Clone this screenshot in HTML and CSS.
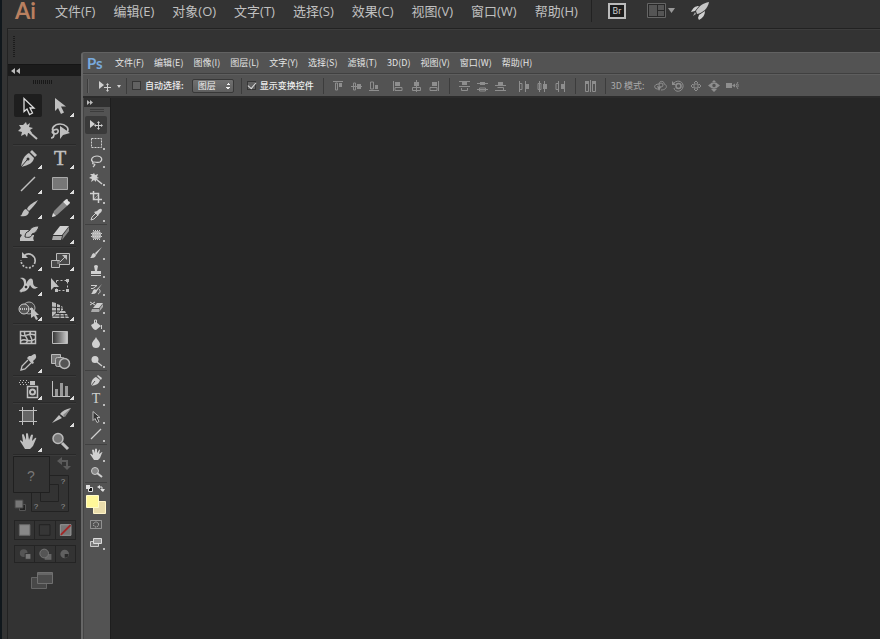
FILE: index.html
```html
<!DOCTYPE html>
<html lang="zh-CN">
<head>
    <meta charset="UTF-8">
    <meta name="viewport" content="width=device-width, initial-scale=1.0">
    <title>Ai / Ps</title>
    <link rel="stylesheet" href="styles.css">
</head>
<body>

    <!-- Illustrator window -->
    <div class="ai">
        <div class="ai-menubar">
            <div class="ai-logo">Ai</div>
            <nav class="ai-menu">
                <a href="#">文件(F)</a>
                <a href="#">编辑(E)</a>
                <a href="#">对象(O)</a>
                <a href="#">文字(T)</a>
                <a href="#">选择(S)</a>
                <a href="#">效果(C)</a>
                <a href="#">视图(V)</a>
                <a href="#">窗口(W)</a>
                <a href="#">帮助(H)</a>
            </nav>
            <div class="ai-apps">
                <button class="bridge">Br</button>
                <button class="app-btn" aria-label="排列文档">
                    <svg width="30" height="18" viewBox="0 0 30 18"><path d="M1.500 1.500h18v14h-18z" fill="#282828" stroke="#666"/><path d="M3 3h8v11H3zM12 3h6v5h-6zM12 9h6v5h-6z" fill="#555"/><path d="M22 6h7l-3.500 5z" fill="#999"/></svg>
                </button>
                <button class="app-btn" aria-label="GPU">
                    <svg width="20" height="20" viewBox="0 0 20 20"><path d="M19 1c-6 1-10 4-13 9l1 3c6-1 11-6 12-12z" fill="#c4c4c4"/><path d="M9 5C5 5 3 7 1 11l4-1zM15 10c0 4-2 7-6 9l-1-2 1-3z" fill="#d0d0d0"/><path d="M5 11l-2 4 3-2z" fill="#aaa"/></svg>
                </button>
            </div>
        </div>
        <div class="ai-control"><span class="grip-v"></span></div>

        <div class="ai-panel">
            <div class="ai-panel-head">
                <svg width="9" height="6" viewBox="0 0 9 6"><path d="M4 0v6L0 3zM9 0v6L5 3z"/></svg>
            </div>
            <div class="ai-panel-grip"></div>

            <div class="ai-tools">
                <button class="active" aria-label="选择工具"><svg viewBox="0 0 28 25"><path d="M10 4.500v13l3-2.500 2.500 5.500 3-1.500-2.500-5h4z" fill="#1c1c1c" stroke="#ddd" stroke-width="1.300"/></svg></button>
                <button class="more" aria-label="直接选择工具"><svg viewBox="0 0 28 25"><path d="M9 4v13l3-3 3 6 3-1.500-3-6h5z"/></svg></button>
                <button aria-label="魔棒工具"><svg viewBox="0 0 28 25"><path d="M12 3l1 3 3-2-1 4 4 1-3 2 2 3-4 0-1 4-2-3-4 2 1-4-4-1 3-3-2-3 4 0z"/><path class="line" d="M15 13l8 7" stroke-width="2"/></svg></button>
                <button aria-label="套索工具"><svg viewBox="0 0 28 25"><path class="line" d="M8 14c-4-5 1-9 6-9s10 4 7 8M6 13c3-4 7-3 6 0s-5 2-6 0M8 15c0 2-1 4-3 4" stroke-width="1.700"/><path d="M14 7v13l3-4 7-2z"/></svg></button>
            </div>
            <div class="ai-tools">
                <button class="more" aria-label="钢笔工具"><svg viewBox="0 0 28 25"><path d="M18 4l5 5-2 2-5-5z"/><path d="M15 7l5 5c-1 5-5 7-13 9 1-8 4-12 8-14z"/><path d="M7 21l6-7" stroke="#333"/><circle cx="14" cy="13" r="1.500" fill="#333"/></svg></button>
                <button class="more" aria-label="文字工具"><svg viewBox="0 0 28 25"><text class="glyph" x="14" y="19">T</text></svg></button>
                <button class="more" aria-label="直线段工具"><svg viewBox="0 0 28 25"><path class="line" d="M7 20L21 6" stroke-width="1.500"/></svg></button>
                <button class="more" aria-label="矩形工具"><svg viewBox="0 0 28 25"><path d="M6.500 6.500h15v12h-15z" fill="#777" stroke="#aaa"/></svg></button>
                <button class="more" aria-label="画笔工具"><svg viewBox="0 0 28 25"><path d="M24 4c-6 3-10 6-11 9l2 2c3-3 6-6 9-11zM12 13l3 3c-1 4-4 5-9 4 3-1 2-6 6-7z"/></svg></button>
                <button class="more" aria-label="铅笔工具"><svg viewBox="0 0 28 25"><path d="M17 6l4 4-10 9-5 2 2-6z" fill="#888"/><path d="M18 5q4-4 4 0 4 1 0 4l-1 1-4-4z" fill="#e0e0e0"/><path d="M6 21l1-4 3 3z" fill="#ddd"/></svg></button>
                <button aria-label="斑点画笔工具"><svg viewBox="0 0 28 25"><path d="M6 9h9l-2 5h7v1c-1 1-1 3 0 5H6v-3l2-3-2-1z"/><path d="M25 5c-6 0-8 2-10 5-3 1-4 3-4 6 4 1 7 0 7-3 4-1 6-4 7-8z" stroke="#333"/></svg></button>
                <button class="more" aria-label="橡皮擦工具"><svg viewBox="0 0 28 25"><path d="M14 5h9l-7 9H7z" fill="#d0d0d0"/><path d="M7 15h9l-1 4H6z" fill="#aaa"/><path d="M17 14l6-8v4l-7 9z" fill="#888"/></svg></button>
            </div>
            <div class="ai-tools">
                <button class="more" aria-label="旋转工具"><svg viewBox="0 0 28 25"><path class="line" d="M10 8c5-5 12 0 11 6" stroke-width="1.700"/><path class="line" d="M21 14c-2 9-14 7-14-2" stroke-width="1.700" stroke-dasharray="2 1.500"/><path d="M8 4v6h6z"/></svg></button>
                <button class="more" aria-label="比例缩放工具"><svg viewBox="0 0 28 25"><path d="M10.500 5.500h13v11h-13z" fill="#484848" stroke="#bbb"/><path d="M5.500 12.500h8v7h-8z" fill="#484848" stroke="#bbb"/><path d="M11 13h3v3h-3z" fill="#777"/><path class="line" d="M14 14l6-6"/><path d="M16 7h5v5z"/></svg></button>
                <button class="more" aria-label="宽度工具"><svg viewBox="0 0 28 25"><path d="M6 5c4-1 7 1 6 6 3-6 6-7 7-3 0 4 1 6 5 6-3 3-6 2-8-2-2 6-6 8-10 6 0-2 4-3 4-7 0-3-1-5-4-6z"/><path class="line" d="M7 19L19 8" stroke="#333"/><circle cx="12" cy="14" r="2" fill="#333" stroke="#ddd"/><circle class="line" cx="7" cy="18" r="1"/></svg></button>
                <button aria-label="自由变换工具"><svg viewBox="0 0 28 25"><path class="line" d="M10.500 7.500h11v10h-11z" stroke-dasharray="2 2"/><path d="M5 5v12l3-3h5zM20 6h3v3h-3zM20 16h3v3h-3zM9 16h3v3H9z"/></svg></button>
                <button class="more" aria-label="形状生成器工具"><svg viewBox="0 0 28 25"><circle cx="15" cy="10" r="6" fill="#444" stroke="#aaa"/><circle cx="10" cy="11" r="5" fill="#555" stroke="#ccc"/><path class="line" d="M6 11h13" stroke-dasharray="1 1" stroke-width="2"/><path d="M17 9v11l3-2 2 4 2-1-2-4h3z"/></svg></button>
                <button class="more" aria-label="透视网格工具"><svg viewBox="0 0 28 25"><path d="M6 4l4 1v10l-4 4zM11 6l3 1v6l-3 2zM15 8l2 1v3l-2 1z" fill="#bbb"/><path d="M6 20l4-4h11l2 4zM12 15l2-2h5l1 2z" fill="#bbb"/><path d="M5 9l12 1M5 13h9M14 16v4M18 16l1 4M8 18h15" fill="none" stroke="#333"/></svg></button>
            </div>
            <div class="ai-tools">
                <button aria-label="网格工具"><svg viewBox="0 0 28 25"><path class="line" d="M6.500 6.500h15v12h-15zM7 10c4 3 7-3 14 0M7 16c4-4 8 3 14-2M11 6c-3 5 6 8 1 12M17 6c-4 5 4 8 0 12" stroke-width="1.500"/></svg></button>
                <button aria-label="渐变工具"><svg viewBox="0 0 28 25"><defs><linearGradient id="fade"><stop stop-color="#333"/><stop offset="1" stop-color="#ccc"/></linearGradient></defs><path d="M6.500 6.500h15v12h-15z" fill="url(#fade)" stroke="#bbb"/></svg></button>
                <button class="more" aria-label="吸管工具"><svg viewBox="0 0 28 25"><path d="M17 6q5-4 5 0 1 2-3 5l1 2-2 1-5-6 2-2z"/><path class="line" d="M14 10l-6 6-1 4 4-1 6-6" stroke-width="1.300"/></svg></button>
                <button aria-label="混合工具"><svg viewBox="0 0 28 25"><path d="M5.500 4.500h9v9h-9z" fill="#777" stroke="#bbb"/><rect x="9.500" y="7.500" width="9" height="9" rx="2" fill="#666" stroke="#bbb"/><circle cx="18.500" cy="13.500" r="5" fill="#555" stroke="#bbb" stroke-width="1.500"/></svg></button>
            </div>
            <div class="ai-tools">
                <button class="more" aria-label="符号喷枪工具"><svg viewBox="0 0 28 25"><path d="M16 4h5v4h-5z"/><path class="line" d="M13.500 9.500h10v11h-10z" stroke-width="1.500"/><circle class="line" cx="18.500" cy="15" r="2.500" stroke-width="2"/><path d="M6 3h1v1H6zM9 3h1v1H9zM12 3h1v1h-1zM5 5h1v1H5zM8 5h1v1H8zM11 5h1v1h-1zM14 5h1v1h-1zM6 7h1v1H6zM9 7h1v1H9zM12 7h1v1h-1z"/></svg></button>
                <button class="more" aria-label="柱形图工具"><svg viewBox="0 0 28 25"><path class="line" d="M6.500 4v15.500H24"/><path d="M9 12h3v7H9zM14 6h3v13h-3zM19 9h3v10h-3z" fill="#999"/></svg></button>
            </div>
            <div class="ai-tools">
                <button aria-label="画板工具"><svg viewBox="0 0 28 25"><path d="M9 7h10v10H9z" fill="#666"/><path class="line" d="M8.500 3v18M19.500 3v18M5 6.500h18M5 17.500h18"/></svg></button>
                <button class="more" aria-label="切片工具"><svg viewBox="0 0 28 25"><path d="M25 4c-5 1-9 3-11 6l4 3zM13 11l3 3-10 5z"/><path d="M17 11l8-7-6 9z" fill="#888"/></svg></button>
                <button class="more" aria-label="抓手工具"><svg viewBox="0 0 28 25"><path d="M11 20l-5-8q0-2 3 1L8 6q1-2 2 0l2 5V5q1-2 2 0l1 6 2-5q1-1 2 0l-1 6 3-3q2-1 1 1l-3 7-3 3z"/></svg></button>
                <button aria-label="缩放工具"><svg viewBox="0 0 28 25"><circle cx="12" cy="9.500" r="5" fill="#777" stroke="#bbb" stroke-width="1.500"/><path class="line" d="M16 14l6 6" stroke-width="3"/></svg></button>
            </div>

            <!-- Fill and stroke -->
            <svg class="fill-stroke" width="64" height="60" viewBox="0 0 64 60">
                <path d="M18.500 19.500h37v36h-37zM27.500 28.500h18v17h-18z" fill="#333" stroke="#222"/>
                <path d="M.5.5h36v36H.5z" fill="#333" stroke="#202020"/>
                <path d="M48 5h6v7" fill="none" stroke="#5b5b5b" stroke-width="2"/>
                <path d="M49 1v8l-5-4zM50 10h8l-4 4z" fill="#5b5b5b"/>
                <path d="M6.500 48.500h6v6h-6z" fill="#222" stroke="#555"/>
                <path d="M2 44h8v8H2z" fill="#777" stroke="#444"/>
                <text class="mark-lg" x="18" y="25">?</text>
                <text class="mark" x="50" y="28">?</text>
                <text class="mark" x="23" y="53">?</text>
                <text class="mark" x="50" y="53">?</text>
            </svg>

            <div class="ai-modes">
                <button aria-label="颜色"><svg viewBox="0 0 20 18"><path d="M4.500 3.500h11v11h-11z" fill="#888" stroke="#666"/></svg></button>
                <button aria-label="渐变"><svg viewBox="0 0 20 18"><path d="M4.500 3.500h11v11h-11z" fill="#363636" stroke="#222"/></svg></button>
                <button aria-label="无"><svg viewBox="0 0 20 18"><path d="M4.500 3.500h11v11h-11z" fill="#777" stroke="#999"/><path d="M5 14L15 4" stroke="#a22626" stroke-width="2"/></svg></button>
            </div>
            <div class="ai-modes draw">
                <button aria-label="正常绘图"><svg viewBox="0 0 20 16"><circle cx="9" cy="7" r="4" fill="#555"/><path d="M10.500 7.500h6v6h-6z" fill="#777" stroke="#333"/></svg></button>
                <button aria-label="背面绘图"><svg viewBox="0 0 20 16"><path d="M10 8h7v6h-7z" fill="#666"/><circle cx="9.500" cy="7.500" r="4.500" fill="#555" stroke="#777"/></svg></button>
                <button aria-label="内部绘图"><svg viewBox="0 0 20 16"><circle cx="9" cy="8" r="4.500" fill="#606060"/><path d="M9 8h4q0 4-4 4z" fill="#2a2a2a"/></svg></button>
            </div>
            <button class="screen-mode" aria-label="更改屏幕模式"><svg width="24" height="20" viewBox="0 0 24 20"><path d="M1.500 6.500h15v11h-15z" fill="#484848" stroke="#666"/><path d="M7.500 1.500h15v11h-15z" fill="#4c4c4c" stroke="#707070"/><path d="M8 2h14v2H8z" fill="#666"/></svg></button>
        </div>
    </div>

    <!-- Photoshop window -->
    <div class="ps">
        <div class="ps-menubar">
            <div class="ps-logo">Ps</div>
            <nav class="ps-menu">
                <a href="#">文件(F)</a>
                <a href="#">编辑(E)</a>
                <a href="#">图像(I)</a>
                <a href="#">图层(L)</a>
                <a href="#">文字(Y)</a>
                <a href="#">选择(S)</a>
                <a href="#">滤镜(T)</a>
                <a href="#">3D(D)</a>
                <a href="#">视图(V)</a>
                <a href="#">窗口(W)</a>
                <a href="#">帮助(H)</a>
            </nav>
        </div>

        <div class="ps-options">
            <span class="ps-grip"></span>
            <button class="preset" aria-label="移动工具"><svg width="26" height="14" viewBox="0 0 26 14"><path d="M2 2v8l5-4z"/><path class="line" d="M10.500 5v7M7 8.500h7"/><path d="M9 6h3l-1.500-2zM9 11h3l-1.500 2zM20 6h4l-2 3z"/></svg></button>
            <span class="divider"></span>
            <input type="checkbox" id="autoSelect">
            <label class="opt-label" for="autoSelect">自动选择:</label>
            <select class="layer-select" aria-label="自动选择"><option>图层</option></select>
            <span class="divider"></span>
            <input type="checkbox" id="showTransform" checked>
            <label class="opt-label" for="showTransform">显示变换控件</label>
            <span class="divider"></span>
            <div class="align">
                <button aria-label="顶对齐"><svg viewBox="0 0 18 14"><path class="line" d="M4 2.500h10M6.500 4v7h2V4z"/><path d="M10 4h3v4h-3z"/></svg></button>
                <button aria-label="垂直居中对齐"><svg viewBox="0 0 18 14"><path class="line" d="M4 7.500h11M6.500 4v7h2V4z"/><path d="M10 5h4v5h-4z"/></svg></button>
                <button aria-label="底对齐"><svg viewBox="0 0 18 14"><path class="line" d="M4 11.500h10M5.500 3v7h3V3z"/><path d="M10 6h3v4h-3z"/></svg></button>
            </div>
            <div class="align">
                <button aria-label="左对齐"><svg viewBox="0 0 18 14"><path class="line" d="M4.500 2v10M6 8.500h7v3H6z"/><path d="M6 3h5v4H6z"/></svg></button>
                <button aria-label="水平居中对齐"><svg viewBox="0 0 18 14"><path class="line" d="M9.500 1v12M5.500 8.500h8v3h-8z"/><path d="M7 3h5v4H7z"/></svg></button>
                <button aria-label="右对齐"><svg viewBox="0 0 18 14"><path class="line" d="M13.500 2v10M5 8.500h7v3H5z"/><path d="M7 3h5v4H7z"/></svg></button>
            </div>
            <span class="divider"></span>
            <div class="align">
                <button aria-label="按顶分布"><svg viewBox="0 0 18 14"><path class="line" d="M4 2.500h11M4 7.500h11M6.500 9v2.500h6V9"/><path d="M7 3h5v3H7z"/></svg></button>
                <button aria-label="按垂直居中分布"><svg viewBox="0 0 18 14"><path class="line" d="M4 4.500h11M4 10.500h11M6.500 9v3h6V9z"/><path d="M7 3h5v3H7z"/></svg></button>
                <button aria-label="按底分布"><svg viewBox="0 0 18 14"><path class="line" d="M4 6.500h11M4 11.500h11M6.500 8.500h6V11"/><path d="M7 3h5v3H7z"/></svg></button>
            </div>
            <div class="align">
                <button aria-label="按左分布"><svg viewBox="0 0 18 14"><path class="line" d="M4.500 2v11M10.500 2v11M5 4.500h2v6H5"/><path d="M11 5h3v5h-3z"/></svg></button>
                <button aria-label="按水平居中分布"><svg viewBox="0 0 18 14"><path class="line" d="M6.500 2v11M11.500 2v11M5 4.500h3v6H5z"/><path d="M10 5h4v5h-4z"/></svg></button>
                <button aria-label="按右分布"><svg viewBox="0 0 18 14"><path class="line" d="M7.500 2v11M13.500 2v11M7 4.500H5v6h2"/><path d="M10 5h3v5h-3z"/></svg></button>
            </div>
            <span class="divider"></span>
            <div class="align">
                <button aria-label="自动对齐图层"><svg viewBox="0 0 18 14"><path class="line" d="M4.500 2.500h3v10h-3zM11.500 2.500h3v10h-3zM9.500 1v12" /><path d="M4 2h4v3H4zM11 2h4v3h-4z"/></svg></button>
            </div>
            <span class="divider"></span>
            <span class="mode-label">3D 模式:</span>
            <div class="align">
                <button aria-label="旋转 3D 对象"><svg viewBox="0 0 18 14"><path class="line" d="M9 10c-7 1-7-5-1-5 0-4 6-3 5 0 4 1 3 6-3 6"/><circle class="line" cx="10" cy="6" r="2"/><path d="M6 7l4 1-2 4z"/></svg></button>
                <button aria-label="滚动 3D 对象"><svg viewBox="0 0 18 14"><path class="line" d="M5 4c4-4 10-1 9 4s-8 6-9 1"/><circle class="line" cx="9.500" cy="7" r="2.500" stroke-width="1.500"/><path d="M3 2v4h4z"/></svg></button>
                <button aria-label="拖动 3D 对象"><svg viewBox="0 0 18 14"><path class="line" d="M8 6V4H7l2-2 2 2h-1v2h2V5l2 2-2 2V8h-2v2h1l-2 2-2-2h1V8H6v1L4 7l2-2v1z"/></svg></button>
                <button aria-label="滑动 3D 对象"><svg viewBox="0 0 18 14"><circle class="line" cx="9" cy="6.500" r="2.500" stroke-width="1.500"/><path d="M9 13l3-3H6zM3 6.500l4-3v6zM15 6.500l-4-3v6zM9 1l2 2H7z"/></svg></button>
                <button aria-label="缩放 3D 对象"><svg viewBox="0 0 18 14"><path d="M3 4h6v5H3zM9 6.500l3-2v4z"/><path class="line" d="M15 3l-2 3.500 2 3.500M15 5v3"/></svg></button>
            </div>
        </div>

        <div class="ps-body">
            <div class="ps-panel">
                <div class="ps-panel-head"><svg width="7" height="5" viewBox="0 0 7 5"><path d="M0 0v5l3-2.500zM3 0v5l3-2.500z"/></svg></div>
                <div class="ps-panel-grip"></div>

                <div class="ps-tools">
                    <button class="active" aria-label="移动工具"><svg viewBox="0 0 22 18"><path d="M5 4v8l5-4z"/><path class="line" d="M13.500 6v7M10 9.500h7"/><path d="M12 7h3l-1.500-2zM12 12h3l-1.500 2zM11 8v3L9 9.500zM16 8v3l2-1.500z"/></svg></button>
                    <button class="more" aria-label="矩形选框工具"><svg viewBox="0 0 22 18"><path class="line" d="M6.500 4.500h10v9h-10z" stroke-dasharray="2 1"/></svg></button>
                    <button class="more" aria-label="套索工具"><svg viewBox="0 0 22 18"><path class="line" d="M8 10c-3-2-1-6 4-6s6 4 3 6c-2 1-4 0-6 0s-2 2 0 2 0 2-1 3" stroke-width="1.200"/></svg></button>
                    <button class="more" aria-label="魔棒工具"><svg viewBox="0 0 22 18"><path d="M9 3l1 2 3-1-1 3 2 1-3 1 0 3-2-2-3 2 1-3-3-1 3-2-2-2 3 0z"/><path class="line" d="M11 9l6 5" stroke-width="1.500"/></svg></button>
                    <button class="more" aria-label="裁剪工具"><svg viewBox="0 0 22 18"><path class="line" d="M8.500 3v8.500H17M5 5.500h8.500V15" stroke-width="1.500"/><path class="line" d="M9 11l5-5" opacity=".5"/></svg></button>
                    <button class="more" aria-label="吸管工具"><svg viewBox="0 0 22 18"><path d="M12 5q4-4 5-1 0 2-3 4l-1 2-4-4z"/><path class="line" d="M11 7l-4 4-1 3 3-1 4-4"/></svg></button>
                </div>
                <div class="ps-tools">
                    <button class="more" aria-label="污点修复画笔工具"><svg viewBox="0 0 22 18"><rect x="7" y="5" width="9" height="8" rx="3" opacity=".8"/><path class="line" d="M8 4.500h7M6 7.500h11M6 10.500h11M8 13.500h7" stroke-dasharray="1 1"/></svg></button>
                    <button class="more" aria-label="画笔工具"><svg viewBox="0 0 22 18"><path d="M17 3l-7 6 1 2zM9 9l2 2c-1 3-3 3-6 3 2-1 1-4 4-5z"/></svg></button>
                    <button class="more" aria-label="仿制图章工具"><svg viewBox="0 0 22 18"><path d="M9 4q2-2 4 0l-1 5h4v3H6V9h4zM6 13h10v1H6z"/></svg></button>
                    <button class="more" aria-label="历史记录画笔工具"><svg viewBox="0 0 22 18"><path d="M17 4l-6 6 1 1zM10 9l2 2c-1 3-3 3-6 3 2-1 1-4 4-5z"/><path class="line" d="M6 5.500h6l-4 3H6M14 9c2 2 1 4-1 5"/></svg></button>
                    <button class="more" aria-label="橡皮擦工具"><svg viewBox="0 0 22 18"><path d="M12 5h6l-4 5H8z"/><path d="M7 11h7v3H6zM15 10l3-4v3l-4 5z" opacity=".7"/><path class="line" d="M5 4l5 3M5 7l5-3"/></svg></button>
                    <button class="more" aria-label="油漆桶工具"><svg viewBox="0 0 22 18"><path d="M6 9l5-3 5 4-5 4q-3 0-5-5z"/><path class="line" d="M9.500 8V4h2v4M16.500 9v4"/></svg></button>
                    <button class="more" aria-label="模糊工具"><svg viewBox="0 0 22 18"><path d="M11 3c1 3 4 4 4 7.500q-.5 3.500-4 3.500t-4-3.500C7 7 10 6 11 3z"/></svg></button>
                    <button class="more" aria-label="减淡工具"><svg viewBox="0 0 22 18"><circle cx="10" cy="7.500" r="3.500"/><path class="line" d="M12 10l5 4" stroke-width="1.500"/></svg></button>
                </div>
                <div class="ps-tools">
                    <button class="more" aria-label="钢笔工具"><svg viewBox="0 0 22 18"><path d="M13 3l4 3-1 2-4-4z"/><path d="M11 5l4 3c-1 4-4 5-9 6 0-5 2-8 5-9z"/><path d="M6 14l4-5" stroke="#535353"/></svg></button>
                    <button class="more" aria-label="文字工具"><svg viewBox="0 0 22 18"><text class="glyph" x="11" y="13">T</text></svg></button>
                    <button class="more" aria-label="路径选择工具"><svg viewBox="0 0 22 18"><path d="M8 3.500v9l2-2 2 4 2-1-2-4h3z" fill="#333" stroke="#bbb"/></svg></button>
                    <button class="more" aria-label="直线工具"><svg viewBox="0 0 22 18"><path class="line" d="M6 13L16 3" stroke-width="1.300"/></svg></button>
                </div>
                <div class="ps-tools">
                    <button class="more" aria-label="抓手工具"><svg viewBox="0 0 22 18"><path d="M9 14L5 8q0-1 3 1L7 4q1-1 2 0l1 3V3q1-1 2 0v4l2-3q1-1 1 0l-1 4 3-2q1 0 0 1l-2 5-2 2z"/></svg></button>
                    <button aria-label="缩放工具"><svg viewBox="0 0 22 18"><circle cx="10" cy="7" r="3.500" fill="#888" stroke="#ccc"/><path class="line" d="M12 9l5 4" stroke-width="2"/></svg></button>
                </div>

                <!-- Foreground and background colours -->
                <svg class="swatches" width="24" height="32" viewBox="0 0 24 32">
                    <path d="M4.500 3.500h4v4h-4z" fill="#111" stroke="#ddd"/><path d="M2 1h4v4H2z" fill="#ddd"/>
                    <path d="M15 3h3v4" fill="none" stroke="#ddd"/><path d="M16 1v4l-3-2zM16 5h5l-2 3z" fill="#ddd"/>
                    <path d="M9.500 17.500h12v12h-12z" fill="#e9dcab" stroke="#fff4c8"/>
                    <path d="M2.500 11.500h12v12h-12z" fill="#fff799" stroke="#fffbc8"/>
                </svg>
                <div class="ps-tools plain">
                    <button aria-label="快速蒙版"><svg viewBox="0 0 22 18"><path class="line" d="M5.500 4.500h11v8h-11z" opacity=".5"/><circle class="line" cx="11" cy="8.500" r="2.500" stroke-dasharray="1 1"/></svg></button>
                    <button class="more" aria-label="更改屏幕模式"><svg viewBox="0 0 22 18"><path d="M5.500 7.500h8v5h-8z" fill="#777" stroke="#ccc"/><path d="M8.500 4.500h8v5h-8z" fill="#999" stroke="#ddd"/></svg></button>
                </div>
            </div>
            <main class="canvas"></main>
        </div>
    </div>

</body>
</html>
```
FILE: styles.css
```css
* {
    box-sizing: border-box;
}

body {
    margin: 0;
    position: relative;
    height: 100vh;
    overflow: hidden;
    background-color: #262626;
    font-family: "Noto Sans CJK SC", sans-serif;
}

button {
    margin: 0;
    padding: 0;
    border: 0;
    background: none;
    color: inherit;
    font-family: inherit;
    display: block;
}

a {
    color: inherit;
    text-decoration: none;
    white-space: nowrap;
}

svg {
    display: block;
    fill: currentColor;
}

.line {
    fill: none;
    stroke: currentColor;
}

/* Illustrator window */
.ai {
    height: 100%;
    display: flex;
    flex-direction: column;
    background-color: #333;
    border-left: 2px solid #10171c; /* Desktop showing at the edge */
    color: #c0c0c0;
}

.ai-menubar {
    height: 28px;
    flex: none;
    display: flex;
    align-items: flex-start;
    padding: 0 13px;
}

.ai-logo {
    width: 40px;
    font-family: Lato, sans-serif;
    font-size: 22px;
    font-weight: bold;
    line-height: 22px;
    color: #b98060;
}

.ai-menu {
    display: flex;
    gap: 18px;
    font-family: "Open Sans", "Noto Sans CJK SC", sans-serif;
    font-size: 13px;
    line-height: 22px;
}

.ai-apps {
    height: 22px;
    display: flex;
    align-items: center;
    gap: 20px;
    margin-left: 13px;
    padding-left: 16px;
    border-left: 1px solid #222;
}

.bridge {
    width: 18px;
    height: 16px;
    border: 2px solid #bbb;
    background-color: #1c1c1c;
    color: #ccc;
    font-family: Roboto, sans-serif;
    font-size: 9px;
    line-height: 12px;
}

.app-btn + .app-btn {
    margin-left: -6px;
}

.ai-control {
    height: 36px;
    flex: none;
    margin-left: 5px;
    padding: 7px 5px;
    border-top: 1px solid #222;
    border-left: 1px solid #222;
    box-shadow: inset 0 1px #3d3d3d;
}

.grip-v {
    display: block;
    width: 2px;
    height: 21px;
    background: repeating-linear-gradient(#1c1c1c 0 1px, #333 1px 2px);
}

.ai-panel {
    width: 74px;
    flex: 1;
    margin-left: 5px;
    border-left: 1px solid #222;
    background-color: #333;
}

.ai-panel-head {
    height: 12px;
    padding: 3px;
    background-color: #1b1b1b;
    border-top: 1px solid #151515;
    color: #bbb;
}

.ai-panel-grip {
    width: 20px;
    height: 4px;
    margin: 4px 25px 10px;
    background: repeating-linear-gradient(90deg, #181818 0 1px, #333 1px 2px);
}

.ai-tools {
    display: grid;
    grid-template-columns: 28px 28px;
    column-gap: 4px;
    margin: 0 5px 1px;
    padding-left: 1px;
    border-bottom: 1px solid #292929;
    box-shadow: 0 1px #3b3b3b;
}

.ai-tools button {
    position: relative;
    height: 25px;
}

.ai-tools svg {
    width: 28px;
    height: 25px;
}

.ai-tools .active {
    height: 23px;
    border-radius: 2px;
    background-color: #1e1e1e;
}

.more::after {
    content: "";
    position: absolute;
    right: 0;
    bottom: 2px;
    width: 4px;
    height: 4px;
    background: linear-gradient(135deg, transparent 50%, #ddd 50%);
}

.glyph {
    font-family: "Liberation Serif", serif;
    font-size: 20px;
    text-anchor: middle;
    stroke: currentColor;
    stroke-width: 0.5px;
}

.fill-stroke {
    margin-left: 5px;
}

.mark,
.mark-lg {
    font-family: "Liberation Sans", sans-serif;
    font-size: 8px;
    text-anchor: middle;
    fill: #999;
}

.mark-lg {
    font-size: 14px;
    fill: #777;
}

.ai-modes {
    display: flex;
    width: 62px;
    margin: 4px 6px 5px;
    border: 1px solid #242424;
}

.ai-modes button {
    flex: 1;
    height: 18px;
}

.ai-modes button + button {
    border-left: 1px solid #242424;
}

.ai-modes svg {
    height: 18px;
    width: 100%;
}

.ai-modes.draw button,
.ai-modes.draw svg {
    height: 16px;
}

.screen-mode {
    margin: 8px 22px;
}

/* Photoshop window, floats over the other one */
.ps {
    position: absolute;
    top: 52px;
    right: 0;
    bottom: 0;
    left: 81px;
    display: flex;
    flex-direction: column;
    background-color: #535353;
    border-top: 1px solid #626262;
    border-left: 2px solid #666;
    border-top-left-radius: 3px;
    color: #d0d0d0;
}

.ps-menubar {
    height: 21px;
    flex: none;
    display: flex;
    align-items: center;
    padding-left: 4px;
    border-bottom: 1px solid #404040;
}

.ps-logo {
    width: 28px;
    font-family: Lato, sans-serif;
    font-size: 15px;
    font-weight: bold;
    line-height: 18px;
    color: #78a9dc;
}

.ps-menu {
    display: flex;
    gap: 10px;
    font-size: 9px;
    line-height: 18px;
    color: #e4e4e4;
}

.ps-options {
    height: 24px;
    flex: none;
    display: flex;
    align-items: center;
    padding-left: 4px;
    border-top: 1px solid #5e5e5e;
    border-bottom: 2px solid #2b2b2b;
    font-size: 9px;
}

.ps-grip {
    width: 2px;
    height: 14px;
    border-left: 1px solid #3c3c3c;
    border-right: 1px solid #636363;
}

.preset {
    margin-left: 8px;
}

.divider {
    width: 1px;
    height: 16px;
    margin: 0 5px 0 3px;
    background-color: #3c3c3c;
}

.ps-options input {
    appearance: none;
    width: 9px;
    height: 9px;
    margin: 0 4px 0 0;
    border: 1px solid #363636;
    background-color: #626262;
}

.ps-options input:checked::after {
    content: "";
    display: block;
    width: 7px;
    height: 4px;
    border: solid #ddd;
    border-width: 0 0 1px 1px;
    transform: rotate(-50deg);
}

.opt-label {
    white-space: nowrap;
    font-weight: 500;
    color: #eee;
}

.layer-select {
    appearance: none;
    width: 42px;
    height: 14px;
    margin: 0 4px 0 8px;
    padding: 0 5px;
    border: 1px solid #383838;
    border-radius: 2px;
    background:
        conic-gradient(from 135deg at 50% 0, #eee 90deg, transparent 0) 33px 3px / 4px 2px no-repeat,
        conic-gradient(from 315deg at 50% 100%, #eee 90deg, transparent 0) 33px 7px / 4px 2px no-repeat,
        linear-gradient(#707070, #5e5e5e);
    color: #eee;
    font-family: inherit;
    font-size: 9px;
    line-height: 12px;
}

.opt-label + .divider {
    margin-left: 9px;
}

.align {
    display: flex;
    margin-right: 6px;
    color: #8e8e8e;
}

.align + .divider {
    margin-left: 0;
}

.align svg {
    width: 18px;
    height: 14px;
}

.mode-label {
    margin-right: 7px;
    white-space: nowrap;
    color: #aaa;
}

.ps-body {
    flex: 1;
    min-height: 0;
    display: flex;
}

.ps-panel {
    width: 27px;
    flex: none;
    border-left: 1px solid #444;
}

.ps-panel-head {
    height: 9px;
    padding: 2px 3px;
    background-color: #303030;
    color: #bbb;
}

.ps-panel-grip {
    width: 14px;
    height: 3px;
    margin: 2px 6px 4px;
    border: solid #3c3c3c;
    border-width: 1px 0;
}

.ps-tools {
    width: 22px;
    margin: 0 2px 1px 1px;
    border-bottom: 1px solid #414141;
}

.ps-tools button {
    position: relative;
    width: 22px;
    height: 18px;
}

.ps-tools svg {
    width: 22px;
    height: 18px;
}

.ps-tools .active {
    border-radius: 2px;
    background-color: #3a3a3a;
}

.ps-tools .more::after {
    right: 2px;
    width: 2px;
    height: 2px;
    background: #bbb;
}

.ps-tools .glyph {
    font-size: 14px;
    stroke: none;
}

.ps-tools.plain {
    border: 0;
}

.canvas {
    flex: 1;
    background-color: #262626;
    border-left: 1px solid #1e1e1e;
}
```
